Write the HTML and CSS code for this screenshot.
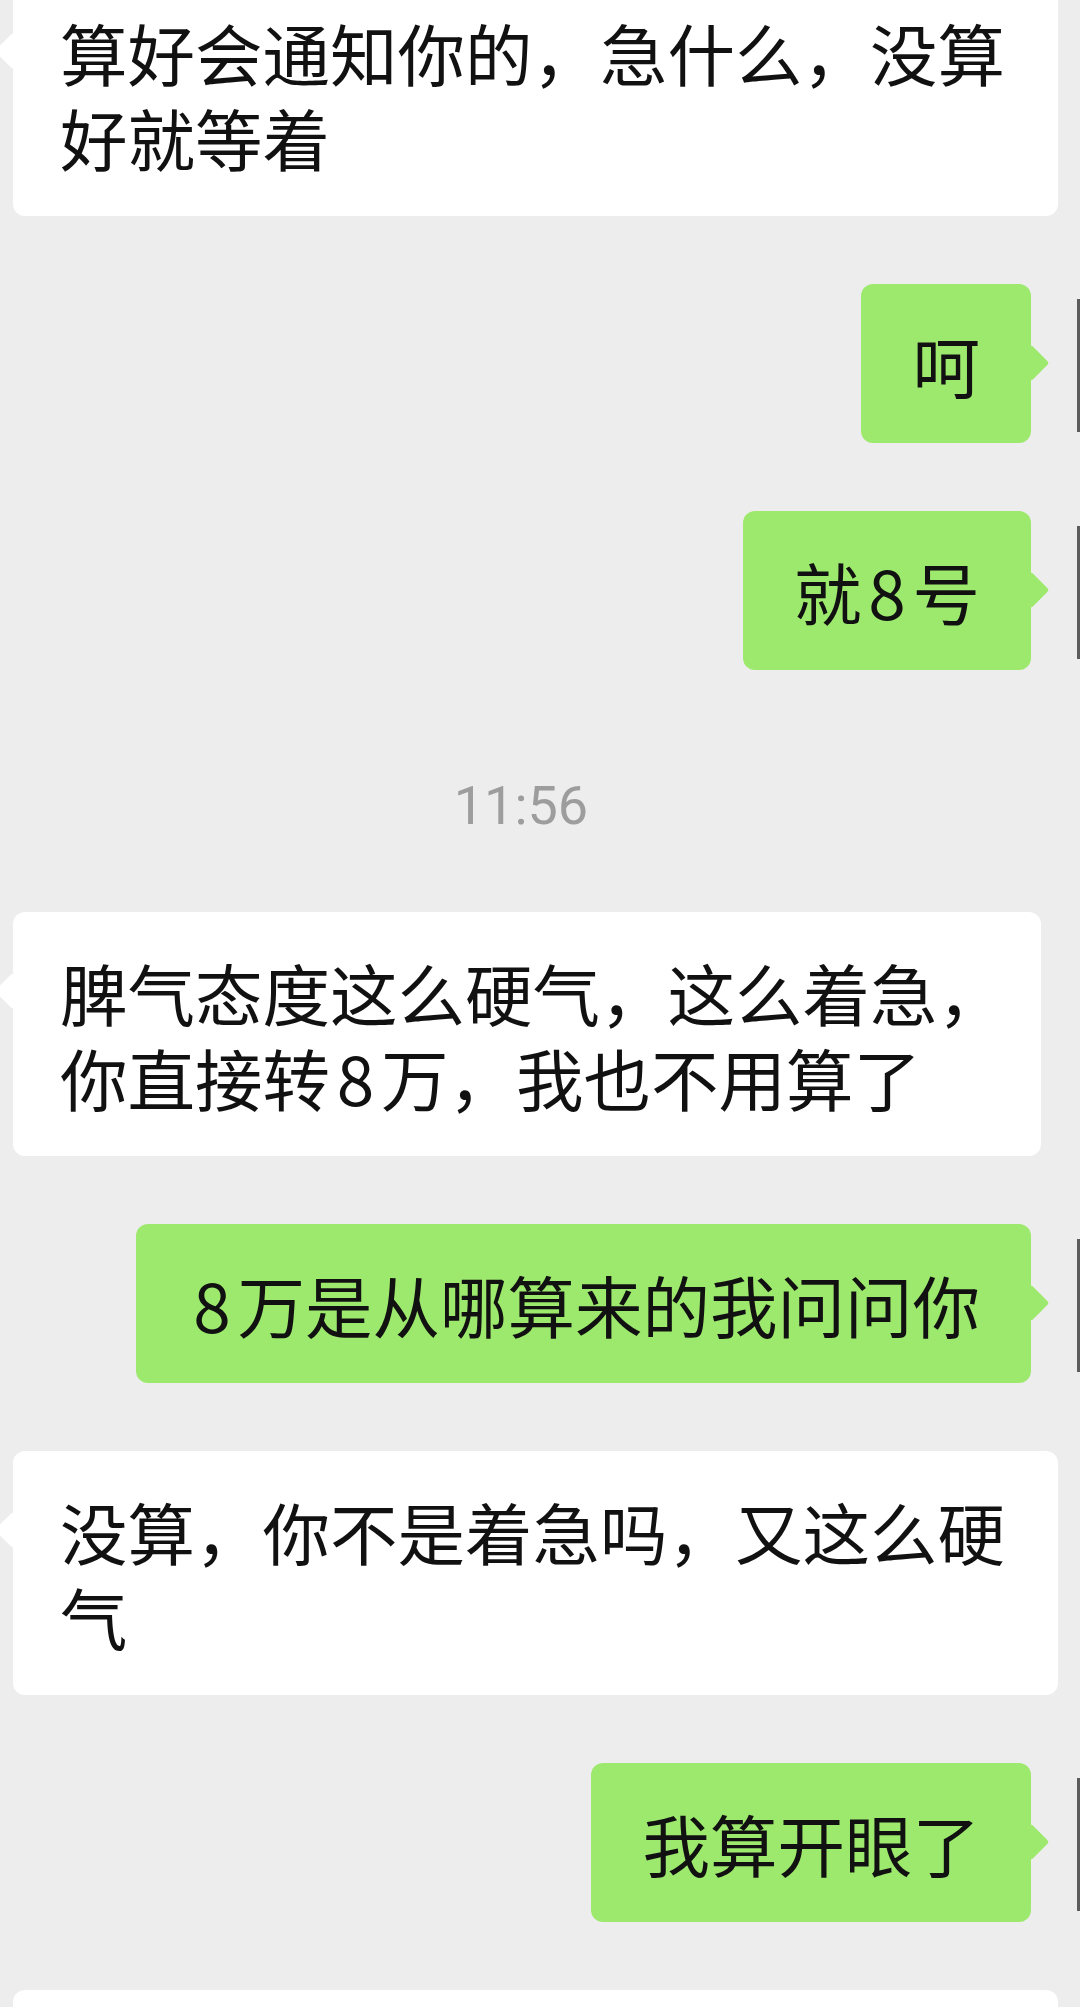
FILE: index.html
```html
<!DOCTYPE html>
<html lang="zh-CN">
<head>
<meta charset="utf-8">
<title>聊天记录</title>
<link rel="stylesheet" href="styles.css">
</head>
<body>
<main class="chat">
  <div class="row row-left row-first">
    <div class="bubble bubble-in">算好会通知你的，急什么，没算<br>好就等着</div>
  </div>
  <div class="row row-right">
    <div class="bubble bubble-out">呵</div>
    <span class="avatar"></span>
  </div>
  <div class="row row-right">
    <div class="bubble bubble-out">就<span class="num">8</span>号</div>
    <span class="avatar"></span>
  </div>
  <div class="time">11:56</div>
  <div class="row row-left">
    <div class="bubble bubble-in">脾气态度这么硬气，这么着急<span class="trim-end">，</span><br>你直接转<span class="num">8</span>万，我也不用算了</div>
  </div>
  <div class="row row-right">
    <div class="bubble bubble-out"><span class="num">8</span>万是从哪算来的我问问你</div>
    <span class="avatar"></span>
  </div>
  <div class="row row-left">
    <div class="bubble bubble-in">没算，你不是着急吗，又这么硬<br>气</div>
  </div>
  <div class="row row-right">
    <div class="bubble bubble-out">我算开眼了</div>
    <span class="avatar"></span>
  </div>
  <div class="row row-left">
    <div class="bubble bubble-in bubble-cut"></div>
  </div>
</main>
</body>
</html>
```
FILE: styles.css
```css
html, body {
  margin: 0;
  padding: 0;
}

body {
  width: 1080px;
  height: 2007px;
  overflow: hidden;
  background: #ededed;
  font-family: "Noto Sans CJK SC", "Noto Sans", sans-serif;
  color: #111;
}

.chat {
  display: flex;
  flex-direction: column;
  gap: 68px;
  padding: 0 0 0 13px;
}

.row {
  display: flex;
}

.row-first {
  margin-top: -28px;
}

.row-right {
  justify-content: flex-end;
}

.bubble {
  position: relative;
  font-size: 67.5px;
  line-height: 85px;
  padding: 37px 53px 37px 47px;
  border-radius: 12px;
  white-space: nowrap;
}

.bubble::after {
  content: "";
  position: absolute;
  top: 66px;
  width: 26px;
  height: 26px;
  background: inherit;
  border-radius: 3px;
  transform: rotate(45deg);
}

.bubble-in {
  background: #ffffff;
}

.bubble-in::after {
  left: -13px;
}

.bubble-out {
  background: #9de96d;
  padding: 37px 51px;
}

.bubble-out::after {
  right: -13px;
}

.bubble-cut {
  width: 945px;
  height: 85px;
}

.num {
  margin: 0 0.1em;
}

.trim-end {
  margin-right: -0.25em;
}

.avatar {
  flex: none;
  width: 49px;
  height: 133px;
  margin-top: 15px;
  background: linear-gradient(to right, transparent 46px, #5c5c5c 46px);
}

.time {
  margin: 38px 0 8px;
  padding-right: 51px;
  height: 60px;
  text-align: center;
  font-family: Roboto, "Liberation Sans", sans-serif;
  font-size: 54px;
  line-height: 60px;
  color: #9d9d9d;
}
```
